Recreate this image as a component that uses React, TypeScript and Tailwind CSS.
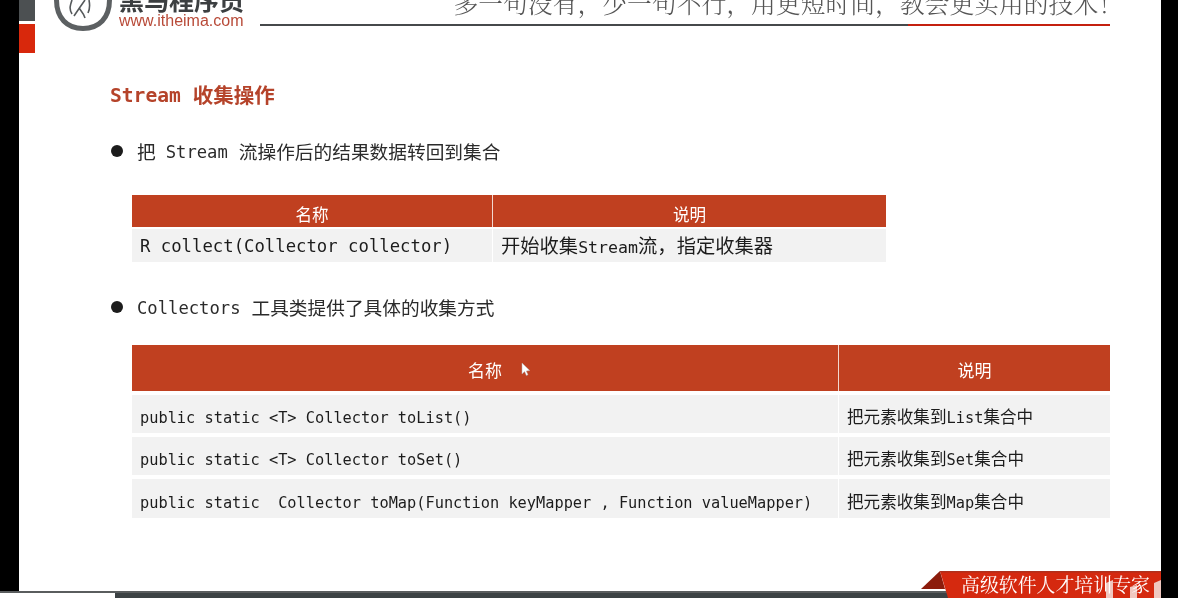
function M({ children, className = "" }: { children: React.ReactNode; className?: string }) {
  return <span className={`font-['DejaVu_Sans_Mono',monospace] ${className}`}>{children}</span>;
}

const slogan = "多一句没有\uFF0C少一句不行\uFF0C用更短时间\uFF0C教会更实用的技术\uFF01";

function Logo() {
  return (
    <svg width="58" height="32" viewBox="0 0 58 32" className="shrink-0 ml-[19px]">
      <path d="M2.5 0 C2.5 18 13 28.5 29 28.5 C45 28.5 55.5 18 55.5 0" fill="none" stroke="#5c6062" strokeWidth="5" />
      <path d="M18 0 C16 6 15 9 18 14 M31 0 C26 7 24 10 20 16 M25 8 C28 12 30 14 31 18 M35 0 C36 5 36 9 34 13" fill="none" stroke="#55595b" strokeWidth="1.6" />
    </svg>
  );
}

function Header() {
  return (
    <div className="flex items-start h-[53px] shrink-0">
      <div className="w-4 flex flex-col gap-[3px] shrink-0">
        <div className="h-[21px] bg-[#4c5052]" />
        <div className="h-[29px] bg-[#d8280c]" />
      </div>
      <Logo />
      <div className="ml-[7px] w-[124px] shrink-0">
        <div className="mt-[-14px] h-[26px] text-[25px] leading-[26px] font-bold text-[#3c3f41] font-['Noto_Sans_CJK_SC',sans-serif] whitespace-nowrap">
          黑马程序员
        </div>
        <div className="mt-[1px] text-[16px] leading-4 text-[#b84a38] font-['Liberation_Sans',sans-serif] whitespace-nowrap">
          www.itheima.com
        </div>
      </div>
      <div className="ml-[17px] w-[850px] shrink-0">
        <div className="mt-[-16px] mb-[2px] mr-[-13px] h-[38px] text-right text-[24.8px] leading-[36px] text-[#555] font-['Noto_Serif_CJK_SC','Noto_Sans_CJK_SC',serif] font-light whitespace-nowrap">
          {slogan}
        </div>
        <div className="flex h-[2px]">
          <div className="w-[648px] bg-[#46494b]" />
          <div className="flex-1 bg-[#c4200f]" />
        </div>
      </div>
    </div>
  );
}

function Bullet({ children, className = "" }: { children: React.ReactNode; className?: string }) {
  return (
    <div className={`flex items-center ml-[92px] h-7 text-[18.7px] text-[#2b2b2b] whitespace-nowrap ${className}`}>
      <span className="w-3 h-3 rounded-full bg-[#1c1c1c] mr-[14px] shrink-0" />
      {children}
    </div>
  );
}

function Cursor() {
  return (
    <svg width="10" height="15" viewBox="0 0 10 15" className="absolute left-[389px] top-[17px]">
      <path d="M1 1 L1 12 L3.6 9.6 L5.4 13.6 L7 12.8 L5.3 9 L8.8 8.6 Z" fill="#fff" stroke="#b0b0b0" strokeWidth="0.5" />
    </svg>
  );
}

function Row({ left, right, className, leftClass = "", rightClass = "" }: { left: React.ReactNode; right: React.ReactNode; className: string; leftClass?: string; rightClass?: string }) {
  return (
    <div className={`grid ${className}`}>
      <div className={`bg-[#f2f2f2] flex items-center pl-2 whitespace-nowrap ${leftClass}`}>{left}</div>
      <div className={`bg-[#f2f2f2] flex items-center pl-2 whitespace-nowrap border-l border-white ${rightClass}`}>{right}</div>
    </div>
  );
}

const rows2 = [
  { code: "public static <T> Collector toList()", name: "List", h: "h-[38px]" },
  { code: "public static <T> Collector toSet()", name: "Set", h: "h-[38px]" },
  { code: "public static  Collector toMap(Function keyMapper , Function valueMapper)", name: "Map", h: "h-[39px]" },
];

export default function App() {
  return (
    <div className="w-[1178px] h-[598px] flex bg-black overflow-hidden font-['Noto_Sans_CJK_SC',sans-serif] blur-[0.4px]">
      <div className="w-[1161px] flex flex-col">
        <div className="flex flex-1 min-h-0">
          <div className="w-[19px] shrink-0" />
          <main className="relative flex-1 bg-white flex flex-col">
            <Header />
            <h1 className="mt-[27px] ml-[91px] h-7 flex items-center text-[20.5px] font-bold text-[#b5432a] whitespace-nowrap">
              <M className="text-[19.6px] mt-[4px]">Stream</M>
              <span className="ml-3">收集操作</span>
            </h1>
            <Bullet className="mt-[29px]">
              把<M className="text-[17.2px] ml-[10px] mr-[11px] mt-[4px]">Stream</M>流操作后的结果数据转回到集合
            </Bullet>

            <div className="mt-[30px] ml-[113px] w-[754px]">
              <div className="grid grid-cols-[360px_394px] h-[32px] bg-[#c04020] text-white text-[16.6px]">
                <div className="flex items-center justify-center pt-[6px]">名称</div>
                <div className="flex items-center justify-center pt-[6px] border-l border-[#f2d8d0]">说明</div>
              </div>
              <Row
                className="grid-cols-[360px_394px] h-[33px] mt-[2px] text-[#1c1c1c]"
                leftClass="pt-[3px]"
                left={<M className="text-[17.3px]">R collect(Collector collector)</M>}
                right={
                  <span className="text-[19.3px]">
                    开始收集<M className="text-[16.6px]">Stream</M>流{"\uFF0C"}指定收集器
                  </span>
                }
              />
            </div>

            <Bullet className="mt-[31px]">
              <M className="text-[17.2px] mr-[11px] mt-[4px]">Collectors</M>工具类提供了具体的收集方式
            </Bullet>

            <div className="mt-[24px] ml-[113px] w-[978px]">
              <div className="grid grid-cols-[706px_272px] h-[46px] bg-[#c04020] text-white text-[17px]">
                <div className="relative flex items-center justify-center pt-1">
                  名称
                  <Cursor />
                </div>
                <div className="flex items-center justify-center pt-1 border-l border-[#f2d8d0]">说明</div>
              </div>
              <div className="mt-[4px] flex flex-col gap-1">
                {rows2.map(({ code, name, h }) => (
                  <Row
                    key={name}
                    className={`grid-cols-[706px_272px] ${h} text-[#1c1c1c]`}
                    leftClass="pt-[9px]"
                    rightClass="pt-[6px]"
                    left={<M className="text-[15.3px] whitespace-pre">{code}</M>}
                    right={
                      <span className="text-[16.6px]">
                        把元素收集到<M className="text-[15.3px]">{name}</M>集合中
                      </span>
                    }
                  />
                ))}
              </div>
            </div>

            <div className="absolute right-0 bottom-[-7px] w-[240px] h-[27px]">
              <svg width="240" height="27" viewBox="0 0 240 27" className="absolute inset-0">
                <path d="M0 18 L19 0 L24 18 Z" fill="#8c1c0c" />
                <path d="M19 0 L240 0 L240 27 L27 27 Z" fill="#d5290f" />
                <path d="M19 0 L240 0 L240 1.5 L19.5 1.5 Z" fill="#b0301c" />
                <path d="M185 12 L192 9 L192 27 L185 27 Z M209 16 L216 14 L216 27 L209 27 Z M233 12 L240 9 L240 27 L233 27 Z" fill="#f0c8c0" />
              </svg>
              <div className="absolute left-[40px] top-[1px] text-[18.9px] leading-[24px] text-white font-['Noto_Serif_CJK_SC','Noto_Sans_CJK_SC',serif] whitespace-nowrap">
                高级软件人才培训专家
              </div>
            </div>
          </main>
        </div>
        <div className="h-[7px] shrink-0 flex border-t-2 border-[#5a5d5e]">
          <div className="w-[115px] bg-white" />
          <div className="flex-1 bg-[#3c4244]" />
        </div>
      </div>
      <div className="w-[17px] shrink-0" />
    </div>
  );
}
